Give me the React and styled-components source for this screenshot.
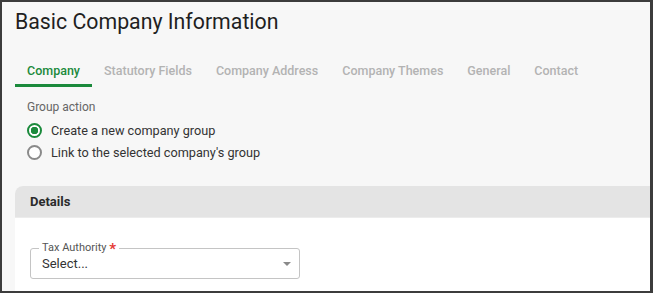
import React from "react";
import styled, { createGlobalStyle } from "styled-components";

const GlobalStyle = createGlobalStyle`
  html, body {
    margin: 0;
    padding: 0;
    background: #ffffff;
    font-family: Roboto, "Liberation Sans", Arial, sans-serif;
  }
`;

const tabs = [
  "Company",
  "Statutory Fields",
  "Company Address",
  "Company Themes",
  "General",
  "Contact",
];

function Radio({ checked, label }) {
  return (
    <RadioRow>
      <RadioCircle $checked={checked} />
      <RadioLabel>{label}</RadioLabel>
    </RadioRow>
  );
}

function App() {
  return (
    <>
      <GlobalStyle />
      <Frame>
        <Title>Basic Company Information</Title>
        <TabBar>
          {tabs.map((t, i) => (
            <Tab key={t} $active={i === 0}>
              {t}
            </Tab>
          ))}
        </TabBar>
        <GroupSection>
          <GroupLabel>Group action</GroupLabel>
          <Radio checked label="Create a new company group" />
          <Radio label="Link to the selected company's group" />
        </GroupSection>
        <Panel>
          <PanelHeader>Details</PanelHeader>
          <PanelBody>
            <SelectField>
              <Legend>
                Tax Authority <Required>*</Required>
              </Legend>
              <SelectValue>Select...</SelectValue>
              <Caret />
            </SelectField>
          </PanelBody>
        </Panel>
      </Frame>
    </>
  );
}
export default App;

const Frame = styled.div`
  box-sizing: border-box;
  width: 653px;
  height: 293px;
  border: 2px solid #3c3c3c;
  border-right-width: 3px;
  background: #f7f7f7;
  overflow: hidden;
  display: flex;
  flex-direction: column;
  padding: 0 0 0 13px;
`;

const Title = styled.h1`
  margin: 6px 0 0 0;
  font-size: 21.3px;
  font-weight: 400;
  line-height: 28px;
  color: #1f1f1f;
`;

const TabBar = styled.div`
  display: flex;
  margin-top: 22px;
`;

const Tab = styled.div`
  padding: 0 12px;
  height: 29px;
  line-height: 26px;
  font-size: 12.5px;
  font-weight: 500;
  color: ${(p) => (p.$active ? "#1b8a3c" : "#b3b3b3")};
  box-sizing: border-box;
  border-bottom: 3px solid ${(p) => (p.$active ? "#1b8a3c" : "transparent")};
`;

const GroupSection = styled.div`
  display: flex;
  flex-direction: column;
  padding-left: 12px;
  margin-top: 12px;
`;

const GroupLabel = styled.div`
  font-size: 12px;
  color: #666666;
  line-height: 16px;
  margin-bottom: 4px;
`;

const RadioRow = styled.div`
  display: flex;
  align-items: center;
  gap: 9px;
  height: 22px;
`;

const RadioCircle = styled.span`
  box-sizing: border-box;
  width: 15px;
  height: 15px;
  border-radius: 50%;
  border: 2px solid ${(p) => (p.$checked ? "#1b8a3c" : "#8a8a8a")};
  background: ${(p) =>
    p.$checked
      ? "radial-gradient(circle, #1b8a3c 0 3.5px, #ffffff 4px)"
      : "#ffffff"};
`;

const RadioLabel = styled.span`
  font-size: 12.7px;
  color: #333333;
`;

const Panel = styled.div`
  margin-top: 23px;
  margin-right: -20px;
  flex: 1;
  display: flex;
  flex-direction: column;
  border-top-left-radius: 8px;
  overflow: hidden;
  background: #ffffff;
`;

const PanelHeader = styled.div`
  background: #e4e4e4;
  height: 31px;
  line-height: 31px;
  padding-left: 15px;
  font-size: 13px;
  font-weight: 700;
  color: #2b2b2b;
  border-bottom: 1px solid #ececec;
`;

const PanelBody = styled.div`
  padding: 30px 0 0 15px;
`;

const SelectField = styled.div`
  position: relative;
  box-sizing: border-box;
  width: 270px;
  height: 31px;
  border: 1px solid #c4c4c4;
  border-radius: 3px;
  padding: 6px 0 0 11px;
`;

const Legend = styled.span`
  position: absolute;
  top: -8px;
  left: 8px;
  padding: 0 3px;
  background: #ffffff;
  font-size: 11px;
  line-height: 14px;
  color: #555555;
`;

const Required = styled.span`
  color: #e53935;
  font-size: 15px;
  font-weight: 700;
  vertical-align: -3px;
`;

const SelectValue = styled.div`
  font-size: 13px;
  line-height: 18px;
  color: #333333;
`;

const Caret = styled.span`
  position: absolute;
  right: 8px;
  top: 13px;
  width: 0;
  height: 0;
  border-left: 4px solid transparent;
  border-right: 4px solid transparent;
  border-top: 4px solid #8a8a8a;
`;
